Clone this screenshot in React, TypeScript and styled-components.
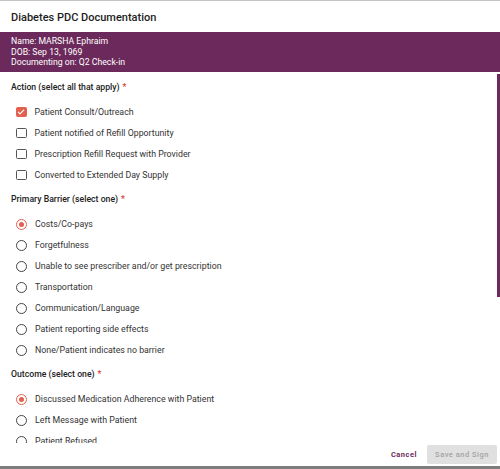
import React, { useEffect, useRef, useState } from "react";
import styled, { createGlobalStyle } from "styled-components";

const Global = createGlobalStyle`
  html, body { margin: 0; padding: 0; background: #fff; }
  body { font-family: Roboto, "Liberation Sans", Arial, sans-serif; }
  * { box-sizing: border-box; }
`;

const PURPLE = "#6b2a5b";
const CORAL = "#e3604e";

const Dialog = styled.div`
  width: 500px;
  height: 469px;
  display: flex;
  flex-direction: column;
  background: #fff;
  border-top: 1px solid #c4c4c4;
  border-bottom: 3px solid #7d7d7d;
  overflow: hidden;
`;

const Title = styled.h1`
  margin: 0;
  height: 31px;
  padding: 1px 11px 0;
  display: flex;
  align-items: center;
  font-size: 11px;
  font-weight: 500;
  color: #1e1e1e;
  flex-shrink: 0;
`;

const PatientBand = styled.div`
  background: ${PURPLE};
  color: #fff;
  height: 41px;
  padding: 4px 11px 0;
  font-size: 8.7px;
  line-height: 10.5px;
  flex-shrink: 0;
  border-bottom: 1px solid #fff;
`;

const ScrollWrap = styled.div`
  position: relative;
  flex: 1;
  min-height: 0;
  display: flex;
`;

const Scroll = styled.div`
  flex: 1;
  overflow-y: auto;
  padding: 0.5px 11px 20px;
  scrollbar-width: none;
  &::-webkit-scrollbar { display: none; }
`;

const Thumb = styled.div`
  position: absolute;
  right: 0;
  width: 3px;
  background: ${PURPLE};
`;

const Section = styled.section`
  padding-top: 7.5px;
`;

const Heading = styled.div`
  font-size: 8.7px;
  line-height: 12px;
  font-weight: 500;
  color: #222;
  margin-bottom: 8.5px;
`;

const Required = styled.span`
  color: #d8352a;
  margin-left: 3px;
`;

const List = styled.div`
  display: flex;
  flex-direction: column;
`;

const Row = styled.label`
  height: 21px;
  display: flex;
  align-items: center;
  gap: 8px;
  padding-left: 5px;
  font-size: 8.8px;
  color: #333;
  cursor: pointer;
`;

const Box = styled.span<{ $on: boolean }>`
  width: 10.5px;
  height: 10.5px;
  border-radius: 1.5px;
  border: 1.3px solid ${(p) => (p.$on ? CORAL : "#555")};
  background: ${(p) => (p.$on ? CORAL : "#fff")};
  display: inline-flex;
  align-items: center;
  justify-content: center;
  flex-shrink: 0;
`;

const Circle = styled.span<{ $on: boolean }>`
  width: 11px;
  height: 11px;
  border-radius: 50%;
  border: 1.3px solid ${(p) => (p.$on ? CORAL : "#444")};
  display: inline-flex;
  align-items: center;
  justify-content: center;
  flex-shrink: 0;
  &::after {
    content: "";
    width: 5px;
    height: 5px;
    border-radius: 50%;
    background: ${(p) => (p.$on ? CORAL : "transparent")};
  }
`;

const Notes = styled.textarea`
  width: 100%;
  height: 120px;
  border: 1px solid #bbb;
  border-radius: 2px;
  font-family: inherit;
  font-size: 9px;
  resize: none;
`;

const Footer = styled.div`
  height: 23px;
  flex-shrink: 0;
  display: flex;
  align-items: center;
  justify-content: flex-end;
  gap: 10px;
  padding: 0 3px 0 0;
`;

const TextButton = styled.button`
  background: none;
  border: none;
  padding: 0;
  font-family: inherit;
  font-size: 7.5px;
  font-weight: 700;
  letter-spacing: 0.5px;
  color: ${PURPLE};
  cursor: pointer;
`;

const FilledButton = styled.button`
  width: 70px;
  height: 19px;
  background: #e0e0e0;
  border: none;
  border-radius: 2px;
  font-family: inherit;
  font-size: 7.5px;
  font-weight: 500;
  letter-spacing: 0.5px;
  color: #a3a3a3;
  padding: 0;
`;

const Check = () => (
  <svg width="8" height="8" viewBox="0 0 24 24" fill="none" stroke="#fff" strokeWidth="3.5" strokeLinecap="round" strokeLinejoin="round">
    <path d="M4 12.5l5 5L20 6.5" />
  </svg>
);

const actions = [
  "Patient Consult/Outreach",
  "Patient notified of Refill Opportunity",
  "Prescription Refill Request with Provider",
  "Converted to Extended Day Supply",
];
const barriers = [
  "Costs/Co-pays",
  "Forgetfulness",
  "Unable to see prescriber and/or get prescription",
  "Transportation",
  "Communication/Language",
  "Patient reporting side effects",
  "None/Patient indicates no barrier",
];
const outcomes = [
  "Discussed Medication Adherence with Patient",
  "Left Message with Patient",
  "Patient Refused",
  "Unable to Reach Patient",
  "Wrong Number",
  "Other",
];

export default function App() {
  const [checked, setChecked] = useState<boolean[]>([true, false, false, false]);
  const [barrier, setBarrier] = useState(0);
  const [outcome, setOutcome] = useState(0);
  const scrollRef = useRef<HTMLDivElement>(null);
  const [thumb, setThumb] = useState({ top: 1, height: 221 });

  const update = () => {
    const el = scrollRef.current;
    if (!el) return;
    const ratio = el.clientHeight / el.scrollHeight;
    const h = Math.max(20, el.clientHeight * ratio);
    const top = 1 + (el.scrollTop / (el.scrollHeight - el.clientHeight || 1)) * (el.clientHeight - h - 2);
    setThumb({ top, height: h });
  };

  useEffect(() => {
    update();
  }, []);

  return (
    <>
      <Global />
      <Dialog>
        <Title>Diabetes PDC Documentation</Title>
        <PatientBand>
          <div>Name: MARSHA Ephraim</div>
          <div>DOB: Sep 13, 1969</div>
          <div>Documenting on: Q2 Check-in</div>
        </PatientBand>
        <ScrollWrap>
          <Scroll ref={scrollRef} onScroll={update}>
            <Section>
              <Heading>
                Action (select all that apply)<Required>*</Required>
              </Heading>
              <List>
                {actions.map((a, i) => (
                  <Row key={a} onClick={() => setChecked(checked.map((c, j) => (j === i ? !c : c)))}>
                    <Box $on={checked[i]}>{checked[i] && <Check />}</Box>
                    {a}
                  </Row>
                ))}
              </List>
            </Section>
            <Section>
              <Heading>
                Primary Barrier (select one)<Required>*</Required>
              </Heading>
              <List>
                {barriers.map((b, i) => (
                  <Row key={b} onClick={() => setBarrier(i)}>
                    <Circle $on={barrier === i} />
                    {b}
                  </Row>
                ))}
              </List>
            </Section>
            <Section>
              <Heading>
                Outcome (select one)<Required>*</Required>
              </Heading>
              <List>
                {outcomes.map((o, i) => (
                  <Row key={o} onClick={() => setOutcome(i)}>
                    <Circle $on={outcome === i} />
                    {o}
                  </Row>
                ))}
              </List>
            </Section>
            <Section>
              <Heading>Notes</Heading>
              <Notes />
            </Section>
          </Scroll>
          <Thumb style={{ top: thumb.top, height: thumb.height }} />
        </ScrollWrap>
        <Footer>
          <TextButton>Cancel</TextButton>
          <FilledButton disabled>Save and Sign</FilledButton>
        </Footer>
      </Dialog>
    </>
  );
}
